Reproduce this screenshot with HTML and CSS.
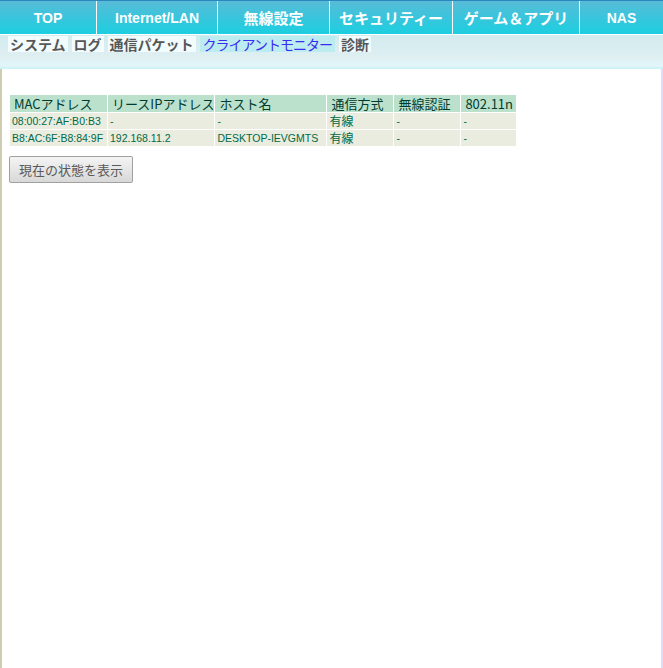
FILE: index.html
```html
<!DOCTYPE html>
<html lang="ja">
<head>
<meta charset="utf-8">
<title>クライアントモニター</title>
<link rel="stylesheet" href="styles.css">
</head>
<body>
<div class="topline"></div>
<nav class="gnav">
  <a class="gitem w-top latin">TOP</a>
  <a class="gitem w-lan latin">Internet/LAN</a>
  <a class="gitem w-wl">無線設定</a>
  <a class="gitem w-sec">セキュリティー</a>
  <a class="gitem w-game">ゲーム＆アプリ</a>
  <a class="gitem w-nas latin">NAS</a>
</nav>
<div class="subnav">
  <span class="tab">システム</span>
  <span class="tab">ログ</span>
  <span class="tab">通信パケット</span>
  <span class="tab active">クライアントモニター</span>
  <span class="tab">診断</span>
</div>
<main class="content">
  <table class="clients">
    <thead>
      <tr>
        <th class="c1">MACアドレス</th>
        <th class="c2">リースIPアドレス</th>
        <th class="c3">ホスト名</th>
        <th class="c4">通信方式</th>
        <th class="c5">無線認証</th>
        <th class="c6">802.11n</th>
      </tr>
    </thead>
    <tbody>
      <tr>
        <td>08:00:27:AF:B0:B3</td>
        <td>-</td>
        <td>-</td>
        <td class="jp">有線</td>
        <td>-</td>
        <td>-</td>
      </tr>
      <tr>
        <td>B8:AC:6F:B8:84:9F</td>
        <td>192.168.11.2</td>
        <td>DESKTOP-IEVGMTS</td>
        <td class="jp">有線</td>
        <td>-</td>
        <td>-</td>
      </tr>
    </tbody>
  </table>
  <button class="btn" type="button">現在の状態を表示</button>
</main>
</body>
</html>
```
FILE: styles.css
```css
html, body {
  margin: 0;
  padding: 0;
  height: 100%;
  background: #ffffff;
  font-family: "Noto Sans CJK JP", "Liberation Sans", sans-serif;
}
body {
  display: flex;
  flex-direction: column;
}
.topline {
  height: 1px;
  background: #2a86bc;
}
.gnav {
  display: flex;
  height: 33px;
  background: linear-gradient(#58bcd8, #3cc4dc 45%, #1ccfe0);
  border-bottom: 1px solid #ffffff;
}
.gitem {
  display: flex;
  align-items: center;
  justify-content: center;
  color: #ffffff;
  font-size: 15px;
  font-weight: bold;
  border-right: 1px solid #ffffff;
  box-sizing: border-box;
  text-decoration: none;
}
.gitem.latin {
  font-family: "Liberation Sans", sans-serif;
  font-size: 14px;
}
.w-top { width: 97px; }
.w-lan { width: 121px; }
.w-wl { width: 112px; }
.w-sec { width: 123px; }
.w-game { width: 127px; }
.w-nas { flex: 1; border-right: none; }

.subnav {
  height: 34px;
  box-sizing: border-box;
  padding: 1px 0 0 8px;
  display: flex;
  align-items: flex-start;
  gap: 4px;
  background: linear-gradient(#d2ebee, #deeff2 60%, #e2f5f8 90%, #c8f2f6);
}
.tab {
  display: block;
  height: 16px;
  line-height: 16px;
  padding: 0 2px;
  background: #f2fcfd;
  color: #575757;
  font-size: 14px;
  font-weight: bold;
}
.tab.active {
  background: #bdecf0;
  color: #3a2cf0;
  font-weight: normal;
  letter-spacing: -1px;
  padding: 0 3px;
}

.content {
  flex: 1;
  border-left: 2px solid #cfcdb0;
  border-right: 2px solid #dedcfa;
  padding: 25px 0 0 7px;
}
.clients {
  border-collapse: separate;
  border-spacing: 1px;
  font-size: 10.5px;
}
.clients th {
  background: #bbe0cc;
  color: #003c2e;
  font-weight: normal;
  font-size: 13px;
  height: 17px;
  padding: 0 0 0 4px;
  text-align: left;
  white-space: nowrap;
  line-height: 17px;
}
.clients td {
  background: #e9ecdf;
  color: #006a46;
  height: 16px;
  padding: 0 0 0 2px;
  line-height: 16px;
  white-space: nowrap;
  font-family: "Liberation Sans", sans-serif;
}
.clients td.jp {
  font-family: "Noto Sans CJK JP", sans-serif;
  font-size: 12px;
}
.c1 { width: 93px; }
.c2 { width: 102px; }
.c3 { width: 107px; }
.c4 { width: 62px; }
.c5 { width: 62px; }
.c6 { width: 51px; }

.btn {
  display: block;
  margin: 9px 0 0 0;
  width: 124px;
  height: 27px;
  padding: 0;
  border: 1px solid #a0a0a0;
  border-radius: 2px;
  background: linear-gradient(#f4f4f4, #e6e6e6 50%, #d8d8d8);
  color: #5a5a5a;
  font-family: "Noto Sans CJK JP", sans-serif;
  font-size: 13px;
}
```
